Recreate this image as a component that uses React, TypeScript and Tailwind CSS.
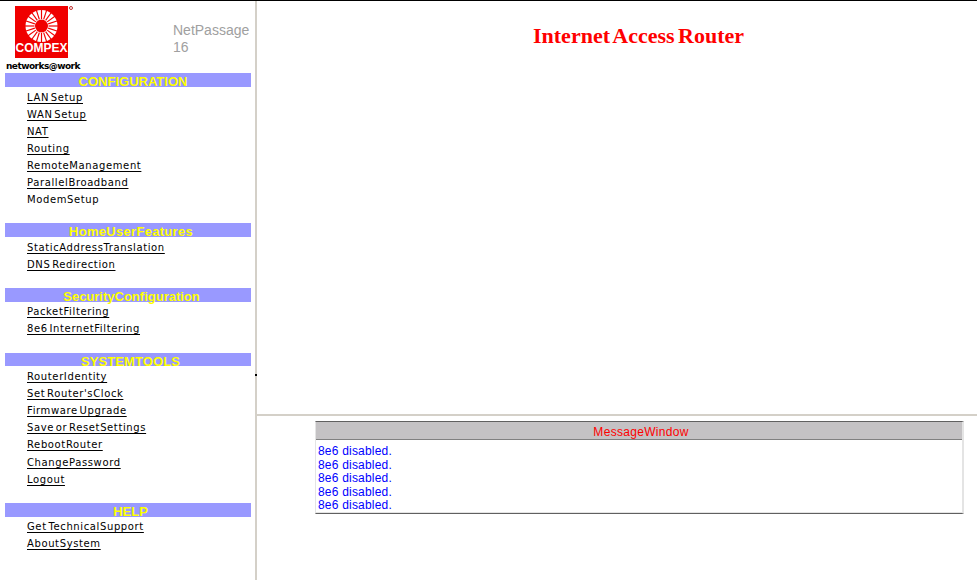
const sections = [
  {
    title: "CONFIGURATION",
    bar: "h-[14px]",
    gap: "mb-[17px]",
    shift: "pl-[10px]",
    list: "",
    links: [
      { label: "LAN Setup" },
      { label: "WAN Setup" },
      { label: "NAT" },
      { label: "Routing" },
      { label: "RemoteManagement" },
      { label: "ParallelBroadband" },
      { label: "ModemSetup", plain: true },
    ],
  },
  {
    title: "HomeUserFeatures",
    bar: "h-[14px]",
    gap: "mb-[17px]",
    shift: "pl-[6px] tracking-[0.3px]",
    list: "",
    links: [{ label: "StaticAddressTranslation" }, { label: "DNS Redirection" }],
  },
  {
    title: "SecurityConfiguration",
    bar: "h-[14px]",
    gap: "mb-[18px]",
    shift: "pl-[7px]",
    list: "-mt-[1px]",
    links: [{ label: "PacketFiltering" }, { label: "8e6 InternetFiltering" }],
  },
  {
    title: "SYSTEMTOOLS",
    bar: "h-[13px]",
    gap: "mb-[17px]",
    shift: "pl-[5px] tracking-[0.1px]",
    list: "",
    links: [
      { label: "RouterIdentity" },
      { label: "Set Router'sClock" },
      { label: "Firmware Upgrade" },
      { label: "Save or ResetSettings" },
      { label: "RebootRouter", tall: true },
      { label: "ChangePassword" },
      { label: "Logout" },
    ],
  },
  {
    title: "HELP",
    bar: "h-[14px]",
    gap: "",
    shift: "pl-[5px]",
    list: "-mt-[1px]",
    links: [{ label: "Get TechnicalSupport" }, { label: "AboutSystem" }],
  },
];

const rays = Array.from({ length: 20 }, (_, i) => i * 18);

function CompexLogo() {
  return (
    <div className="relative h-[52px] w-[53px] bg-[#f00000]">
      <svg viewBox="0 0 53 52" className="absolute inset-0 h-full w-full">
        <circle cx="26.5" cy="20" r="16" fill="#fff" />
        {rays.map((deg) => (
          <line
            key={deg}
            x1="26.5"
            y1="13"
            x2="26.5"
            y2="3"
            stroke="#f00000"
            strokeWidth="1.2"
            transform={`rotate(${deg} 26.5 20)`}
          />
        ))}
        <circle cx="26.5" cy="20" r="6.5" fill="#f00000" />
      </svg>
      <span className="absolute inset-x-0 bottom-[4px] text-center font-['Liberation_Sans',sans-serif] text-[12px] leading-[12px] font-bold text-white">
        COMPEX
      </span>
    </div>
  );
}

function MenuSection({ section }: { section: (typeof sections)[number] }) {
  return (
    <div className={section.gap}>
      <div
        className={`${section.bar} ${section.shift} flex w-[246px] items-start justify-center bg-[#9999ff] text-[13px] leading-[17px] font-bold text-[#ffff00]`}
      >
        {section.title}
      </div>
      <ul className={`${section.list} pl-[22px]`}>
        {section.links.map((link) => (
          <li key={link.label} className={`${link.tall ? "h-[18px]" : "h-[17px]"} leading-[17px]`}>
            <a
              className={`font-['DejaVu_Sans',sans-serif] text-[10px] tracking-[0.62px] [word-spacing:-2px] text-black ${
                link.plain ? "" : "underline underline-offset-2"
              }`}
            >
              {link.label}
            </a>
          </li>
        ))}
      </ul>
    </div>
  );
}

export default function App() {
  return (
    <div className="relative flex h-[580px] w-[977px] overflow-hidden border-t border-black bg-white font-['Liberation_Sans',sans-serif]">
      <aside className="h-full w-[257px] shrink-0 border-r-2 border-[#d4d0c8] pl-[5px]">
        <div className="flex h-[72px]">
          <div className="relative w-[168px]">
            <div className="pt-[5px] pl-[10px]">
              <CompexLogo />
            </div>
            <span className="absolute top-[5px] left-[64px] h-[4px] w-[4px] rounded-full border border-[#c03030]" />
            <p className="ml-[1px] pt-[3px] font-['DejaVu_Sans',sans-serif] text-[9px] leading-[11px] font-bold tracking-[-0.55px] text-black">
              networks@work
            </p>
          </div>
          <p className="pt-[21px] text-[14px] leading-[17px] text-[#a0a0a0]">
            NetPassage
            <br />
            16
          </p>
        </div>
        {sections.map((section) => (
          <MenuSection key={section.title} section={section} />
        ))}
      </aside>
      <span className="absolute top-[373px] left-[255px] h-[2px] w-[2px] bg-black" />
      <main className="flex min-w-0 flex-1 flex-col">
        <div className="h-[415px] border-b-2 border-[#d4d0c8] pt-[21px] pl-[276px]">
          <h1 className="font-['Liberation_Serif',serif] text-[22px] leading-[28px] font-bold whitespace-nowrap [word-spacing:-2px] text-[#ff0000]">
            Internet Access Router
          </h1>
        </div>
        <div className="pt-[5px] pl-[58px]">
          <div className="w-[649px] border-t border-r-2 border-b border-l border-t-[#606060] border-r-[#e4e4e4] border-b-[#606060] border-l-[#e4e4e4]">
            <div className="h-[17px] bg-[#c4c2c4] pl-[4px] text-center text-[12px] leading-[21px] tracking-[0.3px] text-[#ff0000]">
              MessageWindow
            </div>
            <div className="h-[74px] border-t border-b border-t-[#808080] border-b-[#e4e4e4] pl-[2px]">
              <div className="pt-[4px]">
                {[0, 1, 2, 3, 4].map((n) => (
                  <p key={n} className="h-[13.5px] text-[12px] leading-[14px] tracking-[0.2px] text-[#0000ff]">
                    8e6 disabled.
                  </p>
                ))}
              </div>
            </div>
          </div>
        </div>
      </main>
    </div>
  );
}
